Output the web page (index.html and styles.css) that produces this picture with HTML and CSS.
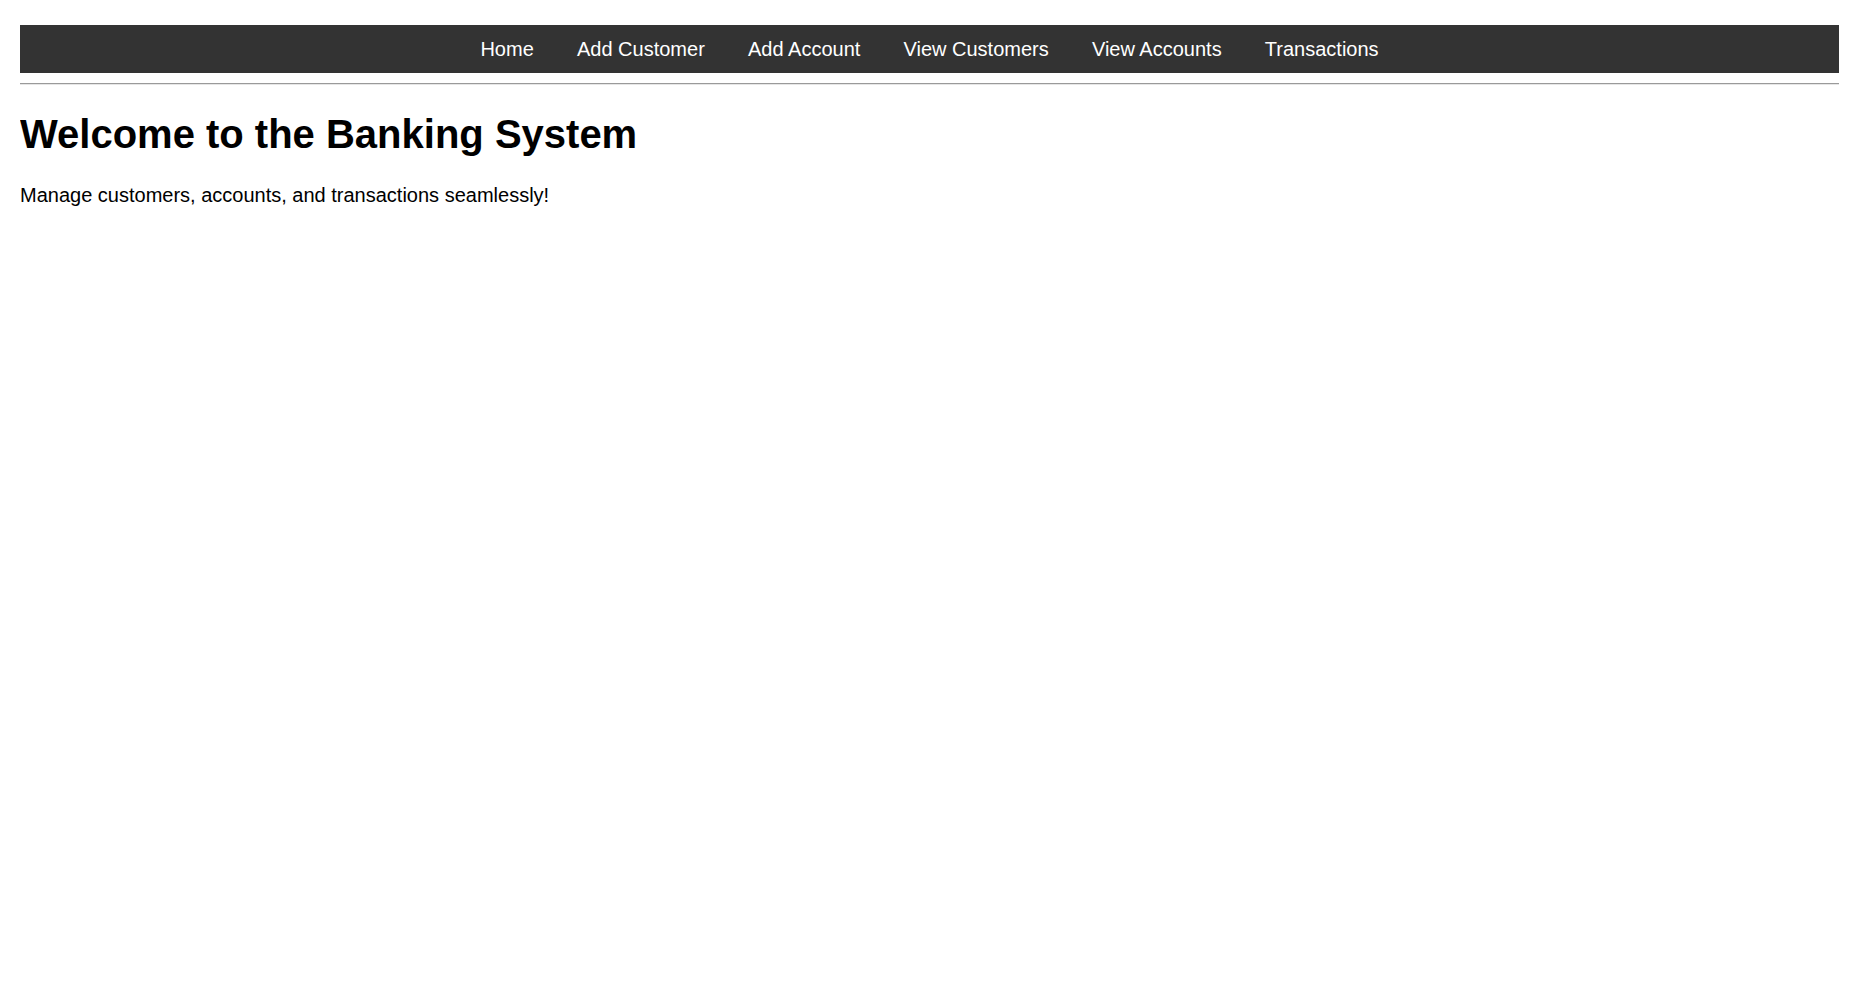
FILE: index.html
```html
<!DOCTYPE html>
<html lang="en">
<head>
<meta charset="utf-8">
<title>Banking System</title>
<link rel="stylesheet" href="styles.css">
</head>
<body>
<nav class="navbar">
  <a class="nav-link" href="#">Home</a>
  <a class="nav-link" href="#">Add Customer</a>
  <a class="nav-link" href="#">Add Account</a>
  <a class="nav-link" href="#">View Customers</a>
  <a class="nav-link" href="#">View Accounts</a>
  <a class="nav-link" href="#">Transactions</a>
</nav>
<hr class="divider">
<main class="content">
  <h1 class="title">Welcome to the Banking System</h1>
  <p class="lead">Manage customers, accounts, and transactions seamlessly!</p>
</main>
</body>
</html>
```

FILE: styles.css
```css
html, body {
  background: #ffffff;
}
body {
  margin: 25px 24px 0 20px;
  font-family: "Liberation Sans", Arial, sans-serif;
  color: #000;
}
.navbar {
  display: flex;
  justify-content: center;
  align-items: center;
  height: 48px;
  background: #333333;
}
.nav-link {
  color: #ffffff;
  text-decoration: none;
  font-size: 20px;
  padding: 0 21.6px;
  line-height: 23px;
}
.divider {
  margin: 10px 0 0 0;
  height: 0;
  border: none;
  border-top: 1px solid #9a9a9a;
  border-bottom: 1px solid #e6e6e6;
}
.title {
  font-size: 40px;
  font-weight: bold;
  margin: 26px 0 0 0;
  line-height: 46px;
}
.lead {
  font-size: 20px;
  margin: 27px 0 0 0;
  line-height: 23px;
}
```
